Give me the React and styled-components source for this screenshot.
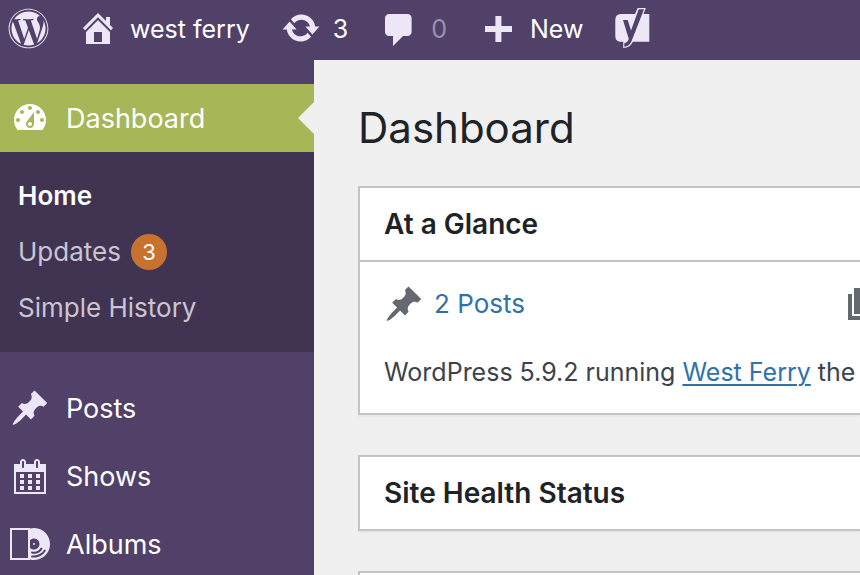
import React from "react";
import styled, { createGlobalStyle, css } from "styled-components";
import { FaWordpress } from "react-icons/fa";

const GlobalStyle = createGlobalStyle`
  * { box-sizing: border-box; }
  html, body { margin: 0; padding: 0; }
  body {
    background: #f0f0f1;
    color: #3c434a;
    font-family: Inter, "Liberation Sans", sans-serif;
    font-size: 25px;
    line-height: 36px;
    overflow: hidden;
  }
  a { text-decoration: none; color: inherit; }
  ul { list-style: none; margin: 0; padding: 0; }
  h1, h2, p { margin: 0; }
`;

const paths = {
  home: "M16 8.5l1.53 1.53-1.06 1.06L10 4.6l-6.47 6.49-1.06-1.06L10 2.5l4 4v-2h2v4zm-6-2.46l6 5.99V18H4v-5.97zM12 17v-5H8v5h4z",
  update:
    "M10.2 3.28c3.53 0 6.43 2.61 6.92 6h2.08l-3.5 4-3.5-4h2.32c-.45-1.97-2.21-3.45-4.32-3.45-1.45 0-2.73.71-3.54 1.78L4.95 5.66C6.23 4.2 8.11 3.28 10.2 3.28zm-.4 13.44c-3.52 0-6.43-2.61-6.92-6H.8l3.5-4c1.17 1.33 2.33 2.67 3.5 4H5.48c.45 1.97 2.21 3.45 4.32 3.45 1.45 0 2.73-.71 3.54-1.78l1.71 1.95c-1.28 1.46-3.15 2.38-5.25 2.38z",
  comment:
    "M5 3h9.3q.82 0 1.41.59T16.3 5v7q0 .82-.59 1.41T14.3 14H12l-5 5v-5H5q-.82 0-1.41-.59T3 12V5q0-.82.59-1.41T5 3z",
  plus: "M17 9v3h-5.3v5H8.7v-5H3.5V9h5.2V4h3v5z",
  dashboard:
    "M3.76 16h12.48c1.1-1.37 1.76-3.11 1.76-5 0-4.42-3.58-8-8-8s-8 3.58-8 8c0 1.89.66 3.63 1.76 5zM10 4c.55 0 1 .45 1 1s-.45 1-1 1-1-.45-1-1 .45-1 1-1zM6 6c.55 0 1 .45 1 1s-.45 1-1 1-1-.45-1-1 .45-1 1-1zm8 0c.55 0 1 .45 1 1s-.45 1-1 1-1-.45-1-1 .45-1 1-1zm-5.37 5.55L12 7v6c0 1.1-.9 2-2 2s-2-.9-2-2c0-.57.24-1.08.63-1.45zM4 10c.55 0 1 .45 1 1s-.45 1-1 1-1-.45-1-1 .45-1 1-1zm12 0c.55 0 1 .45 1 1s-.45 1-1 1-1-.45-1-1 .45-1 1-1zm-5 3c0-.55-.45-1-1-1s-1 .45-1 1 .45 1 1 1 1-.45 1-1z",
  pin: "M10.44 3.02l1.82-1.82 6.36 6.35-1.83 1.82c-1.05-.68-2.48-.57-3.41.36l-.75.75c-.92.93-1.04 2.35-.35 3.41l-1.83 1.82-2.41-2.41-2.8 2.79c-.42.42-3.38 2.71-3.8 2.29s1.86-3.39 2.28-3.81l2.79-2.79L4.1 9.36l1.83-1.82c1.05.69 2.48.57 3.4-.36l.75-.75c.93-.92 1.05-2.35.36-3.41z",
  calendar:
    "M15 4h3v15H2V4h3V3c0-.41.15-.76.44-1.06.29-.29.65-.44 1.06-.44s.77.15 1.06.44c.29.3.44.65.44 1.06v1h4V3c0-.41.15-.76.44-1.06.29-.29.65-.44 1.06-.44s.77.15 1.06.44c.29.3.44.65.44 1.06v1zM6 3v2.5c0 .14.05.26.15.36.09.09.21.14.35.14s.26-.05.35-.14c.1-.1.15-.22.15-.36V3c0-.14-.05-.26-.15-.35-.09-.1-.21-.15-.35-.15s-.26.05-.35.15c-.1.09-.15.21-.15.35zm7 0v2.5c0 .14.05.26.14.36.1.09.22.14.36.14s.26-.05.36-.14c.09-.1.14-.22.14-.36V3c0-.14-.05-.26-.14-.35-.1-.1-.22-.15-.36-.15s-.26.05-.36.15c-.09.09-.14.21-.14.35zm4 15V8H3v10h14zM7 9v2H5V9h2zm2 0h2v2H9V9zm4 2V9h2v2h-2zm-6 1v2H5v-2h2zm2 0h2v2H9v-2zm4 2v-2h2v2h-2zm-6 1v2H5v-2h2zm4 2H9v-2h2v2zm4 0h-2v-2h2v2z",
  album:
    "M0 18h10v-.26c1.52.4 3.17.35 4.76-.24 4.14-1.52 6.27-6.12 4.75-10.26-1.43-3.89-5.58-6-9.51-4.98V2H0v16zM9 3v14H1V3h8zm5.45 8.22c-.68 1.35-2.32 1.9-3.67 1.23-.31-.15-.57-.35-.78-.59V8.13c.8-.86 2.11-1.13 3.22-.58 1.35.68 1.9 2.32 1.23 3.67zm-2.75-.82c.22.16.53.12.7-.1.16-.22.12-.53-.1-.7s-.53-.12-.7.1c-.16.21-.12.53.1.7zm3.01 3.67c-1.17.78-2.56.99-3.83.69-.27-.06-.44-.34-.37-.61s.34-.43.62-.36l.17.04c.96.17 1.98-.01 2.86-.59.47-.32.86-.72 1.14-1.18.15-.23.45-.3.69-.16.23.15.3.46.16.69-.36.57-.84 1.08-1.44 1.48zm1.05 1.57c-1.48.99-3.21 1.32-4.84 1.06-.28-.05-.47-.32-.41-.6.05-.27.32-.45.61-.39l.22.04c1.31.15 2.68-.14 3.87-.94.71-.47 1.27-1.07 1.7-1.74.14-.24.45-.31.68-.16.24.14.31.45.16.69-.49.79-1.16 1.49-1.99 2.04z",
  pages: "M6 15V2h10v13H6zm-1 1h8v2H3V5h2v11z",
};

const IconSvg = styled.svg`
  display: block;
  flex: none;
  width: 40px;
  height: 40px;
  fill: currentColor;
`;

function Icon({ name }) {
  return (
    <IconSvg viewBox="0 0 20 20" aria-hidden="true">
      <path d={paths[name]} fillRule="evenodd" />
    </IconSvg>
  );
}

function YoastIcon() {
  return (
    <IconSvg viewBox="0 0 40 40" aria-hidden="true">
      <path d="M9 6h28.3v27.8H9q-5.7 0-5.7-5.8V12Q3.3 6 9 6z" />
      <path d="M25.6 0h8.2L21 33.5q-2.5 6-9.8 6.500v-6.5z" />
      <path
        d="M26.7 1.2H32L19.6 33q-2 5.3-7.3 5.8v-3.6q3.4-.7 4.5-4.2L11 12h4.7l3.3 10.5z"
        fill="#514169"
      />
    </IconSvg>
  );
}

const AdminBar = styled.header`
  display: flex;
  align-items: center;
  height: 60px;
  padding: 0 8px;
  background: #514169;
  color: #fff;
  white-space: nowrap;
`;

const BarLink = styled.a`
  display: flex;
  align-items: center;
  gap: 12px;
  margin-right: ${(p) => p.$after || 31}px;
  height: 60px;
  padding-bottom: 4px;
`;

const BarIcon = styled.span`
  display: flex;
  color: #ece6f6;
`;

const BarText = styled.span`
  color: ${(p) => (p.$muted ? "#9c90ab" : "#fff")};
  padding-top: 2px;
`;

const Layout = styled.div`
  display: grid;
  grid-template-columns: 314px minmax(0, 1fr);
  min-height: calc(100vh - 60px);
`;

const Sidebar = styled.nav`
  background: #514169;
  color: #fff;
  padding-top: 24px;
  height: calc(100vh - 60px);
  overflow: hidden;
`;

const MenuLink = styled.a`
  display: flex;
  align-items: center;
  gap: 16px;
  height: 68px;
  padding-left: 10px;
  font-size: 27px;
  position: relative;
  color: #fff;

  ${IconSvg} {
    color: #ece6f6;
  }

  ${(p) =>
    p.$current &&
    css`
      background: #a7b656;

      ${IconSvg} {
        color: #fff;
      }

      &::after {
        content: "";
        position: absolute;
        right: 0;
        top: 18px;
        border: 16px solid transparent;
        border-left-width: 0;
        border-right-color: #f0f0f1;
      }
    `}
`;

const MenuText = styled.span`
  padding-top: 2px;
`;

const SubMenu = styled.ul`
  background: #403452;
  padding: 16px 18px;
  margin-bottom: 22px;
`;

const SubLink = styled.a`
  display: flex;
  align-items: center;
  gap: 10px;
  height: 56px;
  font-size: 26px;
  color: ${(p) => (p.$current ? "#fff" : "#cbc5d3")};
  font-weight: ${(p) => (p.$current ? 600 : 400)};
`;

const Badge = styled.span`
  width: 36px;
  height: 36px;
  border-radius: 50%;
  background: #c7732f;
  color: #fff;
  font-size: 22px;
  text-align: center;
`;

const Content = styled.main`
  padding: 36px 0 0 44px;
  height: calc(100vh - 60px);
  overflow: hidden;
`;

const Title = styled.h1`
  font-size: 42px;
  font-weight: 400;
  line-height: 64px;
  color: #1d2327;
  margin-bottom: 26px;
`;

const Panel = styled.section`
  background: #fff;
  border: 2px solid #c3c4c7;
  border-right: 0;
  box-shadow: 0 2px 2px rgba(0, 0, 0, 0.04);
  margin-bottom: 40px;
  min-height: 76px;
`;

const PanelTitle = styled.h2`
  padding: 18px 24px;
  border-bottom: ${(p) => (p.$open ? "2px solid #c3c4c7" : "0")};
  font-size: 28px;
  font-weight: 600;
  color: #1d2327;
`;

const PanelBody = styled.div`
  padding: 22px 0 23px 24px;
`;

const Glance = styled.ul`
  display: grid;
  grid-template-columns: 458px 1fr;
  margin-bottom: 30px;
`;

const GlanceLink = styled.a`
  display: flex;
  align-items: center;
  gap: 10px;
  height: 40px;
  font-size: 26px;
  color: #2f72a8;

  ${IconSvg} {
    color: #646970;
  }
`;

const Version = styled.p`
  white-space: nowrap;

  a {
    color: #2f72a8;
    text-decoration: underline;
    text-decoration-thickness: 2px;
    text-underline-offset: 3px;
  }
`;

const menu = [
  { icon: "pin", label: "Posts" },
  { icon: "calendar", label: "Shows" },
  { icon: "album", label: "Albums" },
];

export default function App() {
  return (
    <>
      <GlobalStyle />
      <AdminBar>
        <BarLink href="#about" aria-label="About WordPress" $after={29}>
          <BarIcon><FaWordpress size={41} /></BarIcon>
        </BarLink>
        <BarLink href="#site">
          <BarIcon><Icon name="home" /></BarIcon>
          <BarText>west ferry</BarText>
        </BarLink>
        <BarLink href="#updates">
          <BarIcon><Icon name="update" /></BarIcon>
          <BarText>3</BarText>
        </BarLink>
        <BarLink href="#comments">
          <BarIcon><Icon name="comment" /></BarIcon>
          <BarText $muted>0</BarText>
        </BarLink>
        <BarLink href="#new" $after={29}>
          <BarIcon><Icon name="plus" /></BarIcon>
          <BarText>New</BarText>
        </BarLink>
        <BarLink href="#seo" aria-label="SEO">
          <BarIcon><YoastIcon /></BarIcon>
        </BarLink>
      </AdminBar>
      <Layout>
        <Sidebar>
          <MenuLink href="#dashboard" $current>
            <Icon name="dashboard" />
            <MenuText>Dashboard</MenuText>
          </MenuLink>
          <SubMenu>
            <li><SubLink href="#home" $current>Home</SubLink></li>
            <li><SubLink href="#core">Updates <Badge>3</Badge></SubLink></li>
            <li><SubLink href="#history">Simple History</SubLink></li>
          </SubMenu>
          {menu.map((item) => (
            <MenuLink key={item.label} href={`#${item.label}`}>
              <Icon name={item.icon} />
              <MenuText>{item.label}</MenuText>
            </MenuLink>
          ))}
        </Sidebar>
        <Content>
          <Title>Dashboard</Title>
          <Panel>
            <PanelTitle $open>At a Glance</PanelTitle>
            <PanelBody>
              <Glance>
                <li><GlanceLink href="#posts"><Icon name="pin" />2 Posts</GlanceLink></li>
                <li><GlanceLink href="#pages" aria-label="Pages"><Icon name="pages" /></GlanceLink></li>
              </Glance>
              <Version>
                WordPress 5.9.2 running <a href="#theme">West Ferry</a> the
              </Version>
            </PanelBody>
          </Panel>
          <Panel>
            <PanelTitle>Site Health Status</PanelTitle>
          </Panel>
          <Panel />
        </Content>
      </Layout>
    </>
  );
}
